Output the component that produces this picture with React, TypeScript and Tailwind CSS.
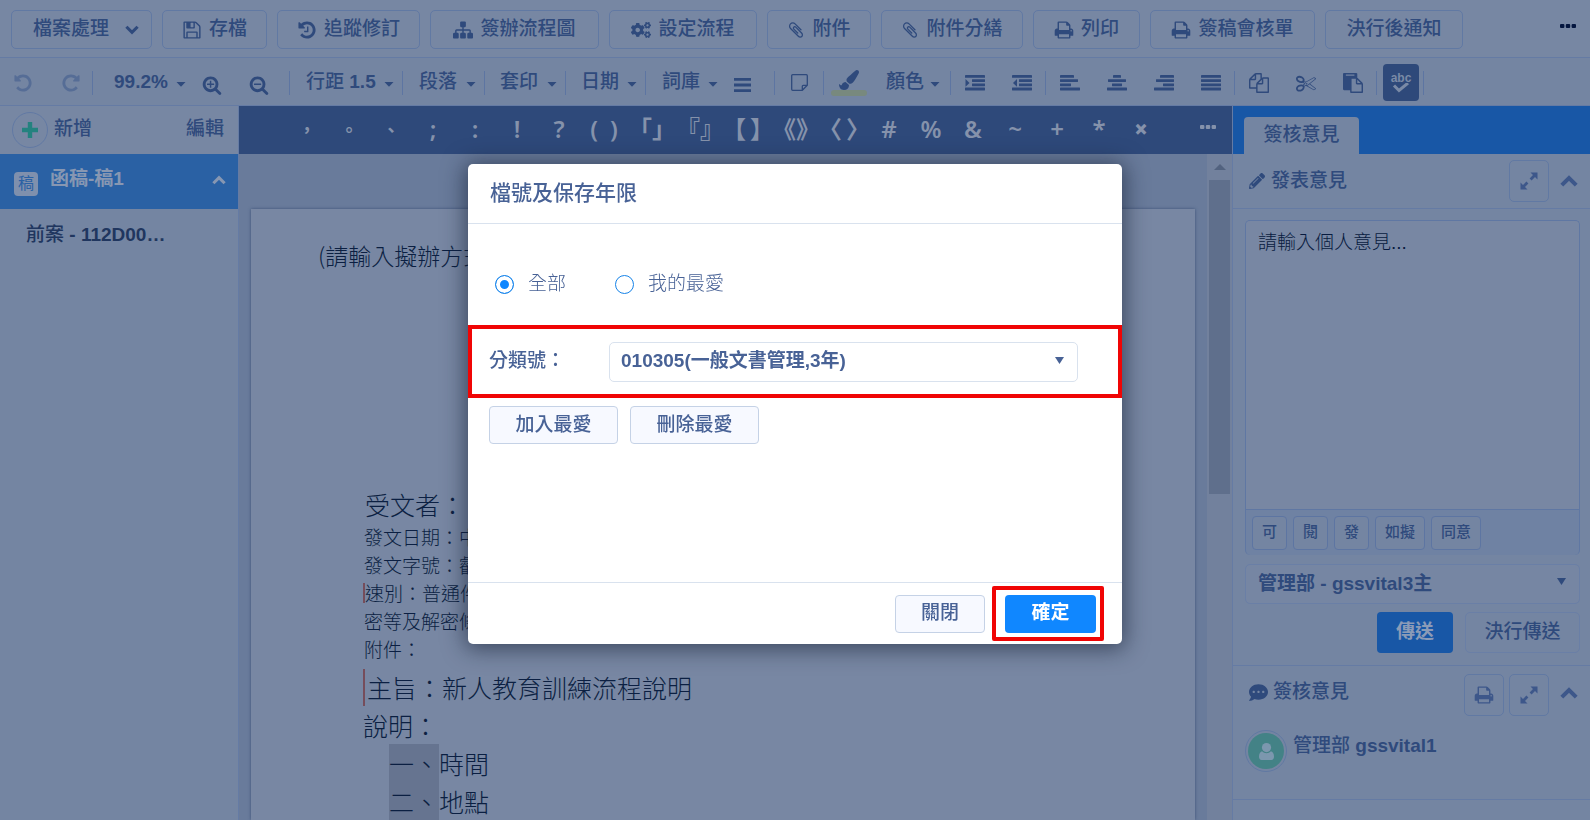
import { useState } from 'react'
import type { ReactNode } from 'react'

import { clsx } from 'clsx'
import { FaCogs, FaCommentDots, FaPaintBrush, FaPencilAlt } from 'react-icons/fa'

const glyphs = {
  save: 'M512 1536h768v-384h-768v384zm896 0h128v-896q0-14-10-38.5t-20-34.5l-281-281q-10-10-34-20t-39-10v416q0 40-28 68t-68 28h-576q-40 0-68-28t-28-68v-416h-128v1280h128v-416q0-40 28-68t68-28h832q40 0 68 28t28 68v416zm-384-928v-320q0-13-9.5-22.5t-22.5-9.5h-192q-13 0-22.5 9.5t-9.5 22.5v320q0 13 9.5 22.5t22.5 9.5h192q13 0 22.5-9.5t9.5-22.5zm640 32v928q0 40-28 68t-68 28h-1344q-40 0-68-28t-28-68v-1344q0-40 28-68t68-28h928q40 0 88 20t76 48l280 280q28 28 48 76t20 88z',
  undo: 'M1664 896q0 156-61 298t-164 245-245 164-298 61q-172 0-327-72.5t-264-204.5q-7-10-6.5-22.5t8.5-20.5l137-138q10-9 25-9 16 2 23 12 73 95 179 147t225 52q104 0 198.5-40.5t163.5-109.5 109.5-163.5 40.5-198.5-40.5-198.5-109.5-163.5-163.5-109.5-198.5-40.5q-98 0-188 35.5t-160 101.5l137 138q31 30 14 69-17 40-59 40h-448q-26 0-45-19t-19-45v-448q0-42 40-59 39-17 69 14l130 129q107-101 244.5-156.5t284.5-55.5q156 0 298 61t245 164 164 245 61 298z',
  history:
    'M1664 896q0 156-61 298t-164 245-245 164-298 61q-172 0-327-72.5t-264-204.5q-7-10-6.5-22.5t8.5-20.5l137-138q10-9 25-9 16 2 23 12 73 95 179 147t225 52q104 0 198.5-40.5t163.5-109.5 109.5-163.5 40.5-198.5-40.5-198.5-109.5-163.5-163.5-109.5-198.5-40.5q-98 0-188 35.5t-160 101.5l137 138q31 30 14 69-17 40-59 40h-448q-26 0-45-19t-19-45v-448q0-42 40-59 39-17 69 14l130 129q107-101 244.5-156.5t284.5-55.5q156 0 298 61t245 164 164 245 61 298zm-640-288v448q0 14-9 23t-23 9h-320q-14 0-23-9t-9-23v-64q0-14 9-23t23-9h224v-352q0-14 9-23t23-9h64q14 0 23 9t9 23z',
  sitemap:
    'M1792 1248v320q0 40-28 68t-68 28h-320q-40 0-68-28t-28-68v-320q0-40 28-68t68-28h96v-192h-512v192h96q40 0 68 28t28 68v320q0 40-28 68t-68 28h-320q-40 0-68-28t-28-68v-320q0-40 28-68t68-28h96v-192h-512v192h96q40 0 68 28t28 68v320q0 40-28 68t-68 28h-320q-40 0-68-28t-28-68v-320q0-40 28-68t68-28h96v-192q0-52 38-90t90-38h512v-192h-96q-40 0-68-28t-28-68v-320q0-40 28-68t68-28h320q40 0 68 28t28 68v320q0 40-28 68t-68 28h-96v192h512q52 0 90 38t38 90v192h96q40 0 68 28t28 68z',
  clip: 'M1596 1385q0 117-79 196t-196 79q-135 0-235-100l-777-776q-113-115-113-271 0-159 110-270t269-111q158 0 273 113l605 606q10 10 10 22 0 16-30.5 46.5t-46.5 30.5q-13 0-23-10l-606-607q-79-77-181-77-106 0-179 75t-73 181q0 105 76 181l776 777q63 63 145 63 64 0 106-42t42-106q0-82-63-145l-581-581q-26-24-60-24-29 0-48 19t-19 48q0 32 25 59l410 410q10 10 10 22 0 16-31 47t-47 31q-12 0-22-10l-410-410q-63-61-63-149 0-82 57-139t139-57q88 0 149 63l581 581q100 98 100 235z',
  print:
    'M448 1536h896v-256h-896v256zm0-640h896v-384h-160q-40 0-68-28t-28-68v-160h-640v640zm1152 64q0-26-19-45t-45-19-45 19-19 45 19 45 45 19 45-19 19-45zm128 0v416q0 13-9.5 22.5t-22.5 9.5h-224v160q0 40-28 68t-68 28h-960q-40 0-68-28t-28-68v-160h-224q-13 0-22.5-9.5t-9.5-22.5v-416q0-79 56.5-135.5t135.5-56.5h64v-544q0-40 28-68t68-28h672q40 0 88 20t76 48l152 152q28 28 48 76t20 88v256h64q79 0 135.5 56.5t56.5 135.5z',
  zoomIn:
    'M1088 800v64q0 13-9.5 22.5t-22.5 9.5h-224v224q0 13-9.5 22.5t-22.5 9.5h-64q-13 0-22.5-9.5t-9.5-22.5v-224h-224q-13 0-22.5-9.5t-9.5-22.5v-64q0-13 9.5-22.5t22.5-9.5h224v-224q0-13 9.5-22.5t22.5-9.5h64q13 0 22.5 9.5t9.5 22.5v224h224q13 0 22.5 9.5t9.5 22.5zm128 32q0-185-131.5-316.5t-316.5-131.5-316.5 131.5-131.5 316.5 131.5 316.5 316.5 131.5 316.5-131.5 131.5-316.5zm512 832q0 53-37.5 90.5t-90.5 37.5q-54 0-90-38l-343-342q-179 124-399 124-143 0-273.5-55.5t-225-150-150-225-55.5-273.5 55.5-273.5 150-225 225-150 273.5-55.5 273.5 55.5 225 150 150 225 55.5 273.5q0 220-124 399l343 343q37 37 37 90z',
  zoomOut:
    'M1088 800v64q0 13-9.5 22.5t-22.5 9.5h-576q-13 0-22.5-9.5t-9.5-22.5v-64q0-13 9.5-22.5t22.5-9.5h576q13 0 22.5 9.5t9.5 22.5zm128 32q0-185-131.5-316.5t-316.5-131.5-316.5 131.5-131.5 316.5 131.5 316.5 316.5 131.5 316.5-131.5 131.5-316.5zm512 832q0 53-37.5 90.5t-90.5 37.5q-54 0-90-38l-343-342q-179 124-399 124-143 0-273.5-55.5t-225-150-150-225-55.5-273.5 55.5-273.5 150-225 225-150 273.5-55.5 273.5 55.5 225 150 150 225 55.5 273.5q0 220-124 399l343 343q37 37 37 90z',
  copy: 'M1696 384q40 0 68 28t28 68v1216q0 40-28 68t-68 28h-960q-40 0-68-28t-28-68v-288h-544q-40 0-68-28t-28-68v-672q0-40 20-88t48-76l408-408q28-28 76-48t88-20h416q40 0 68 28t28 68v328q68-40 128-40h416zm-544 213l-299 299h299v-299zm-640-384l-299 299h299v-299zm196 647l316-316v-416h-384v416q0 40-28 68t-68 28h-416v640h512v-256q0-40 20-88t48-76zm956 804v-1152h-384v416q0 40-28 68t-68 28h-416v640h896z',
  cut: 'M960 896q26 0 45 19t19 45-19 45-45 19-45-19-19-45 19-45 45-19zm300 64l507 398q28 20 25 56-5 35-35 51l-128 64q-13 7-29 7-17 0-31-8l-690-387-110 66q-8 4-12 5 14 49 10 97-7 77-56 147.5t-132 123.5q-132 84-277 84-136 0-222-78-90-84-79-207 7-76 56-147t131-124q132-84 278-84 83 0 151 31 9-13 22-22l122-73-122-73q-13-9-22-22-68 31-151 31-146 0-278-84-82-53-131-124t-56-147q-5-59 15.5-113t63.5-93q85-79 222-79 145 0 277 84 83 52 132 123t56 148q4 48-10 97 4 1 12 5l110 66 690-387q14-8 31-8 16 0 29 7l128 64q30 16 35 51 3 36-25 56zm-681-260q46-42 21-108t-106-117q-92-59-192-59-74 0-113 36-46 42-21 108t106 117q92 59 192 59 74 0 113-36zm-85 745q81-51 106-117t-21-108q-39-36-113-36-100 0-192 59-81 51-106 117t21 108q39 36 113 36 100 0 192-59zm178-613l96 58v-11q0-36 33-56l14-8-79-44-26 26q-3 3-10 11t-12 12q-2 2-4 3.5t-3 2.5zm224 224l96 32 736-576-128-64-768 431v113l-160 96 9 8q2 2 7 6 4 4 11 12t11 12l26 26zm704 416l128-64-520-408-177 138q-2 3-13 7z',
  paste:
    'M768 1664h896v-640h-416q-40 0-68-28t-28-68v-416h-384v1152zm256-1440v-64q0-13-9.5-22.5t-22.5-9.5h-704q-13 0-22.5 9.5t-9.5 22.5v64q0 13 9.5 22.5t22.5 9.5h704q13 0 22.5-9.5t9.5-22.5zm256 672h299l-299-299v299zm512 128v672q0 40-28 68t-68 28h-960q-40 0-68-28t-28-68v-160h-544q-40 0-68-28t-28-68v-1344q0-40 28-68t68-28h1088q40 0 68 28t28 68v328q21 13 36 28l408 408q28 28 48 76t20 88z',
}

function Glyph({ name, className = 'size-5' }: { name: keyof typeof glyphs; className?: string }) {
  return (
    <svg viewBox="0 0 1792 1792" fill="currentColor" className={clsx('shrink-0', className)}>
      <path d={glyphs[name]} />
    </svg>
  )
}

// each row is [x, width] on a 20px wide grid
const lineRows = {
  left: [[0, 14], [0, 18], [0, 11], [0, 20]],
  center: [[6, 8], [1, 18], [5, 10], [0, 20]],
  right: [[6, 14], [2, 18], [9, 11], [0, 20]],
  justify: [[0, 20], [0, 20], [0, 20], [0, 20]],
  indent: [[0, 20], [7, 13], [7, 13], [0, 20]],
  outdent: [[0, 20], [7, 13], [7, 13], [0, 20]],
}

function LinesIcon({ kind }: { kind: keyof typeof lineRows }) {
  return (
    <svg viewBox="0 0 20 16" fill="currentColor" className="h-4 w-5">
      {lineRows[kind].map(([x, width], i) => (
        <rect key={i} x={x} y={i * 4.2} width={width} height="2.8" rx="0.4" />
      ))}
      {kind === 'indent' && <path d="M0.5 4l4 3.9-4 3.9z" />}
      {kind === 'outdent' && <path d="M5 4L1 7.9l4 3.9z" />}
    </svg>
  )
}

function Chevron({ up, className }: { up?: boolean; className?: string }) {
  return (
    <svg
      viewBox="0 0 18 12"
      fill="none"
      stroke="currentColor"
      strokeWidth="4"
      className={clsx('shrink-0', className)}
    >
      <path d={up ? 'M1.8 10.2L9 3l7.2 7.2' : 'M1.8 1.8L9 9l7.2-7.2'} />
    </svg>
  )
}

function Caret() {
  return (
    <svg viewBox="0 0 10 5" fill="currentColor" className="mt-1 h-[5px] w-2.5 shrink-0">
      <path d="M0.5 0h9L5 4.8z" />
    </svg>
  )
}

function ExpandIcon() {
  return (
    <svg viewBox="0 0 18 18" fill="currentColor" className="size-[18px]">
      <path d="M17.5.5v7L15 5l-3.4 3.4-2-2L13 3 10.5.5zM.5 17.5v-7L3 13l3.4-3.4 2 2L5 15l2.5 2.5z" />
    </svg>
  )
}

function Dots() {
  return (
    <svg viewBox="0 0 16 4" fill="currentColor" className="h-1 w-4">
      <rect width="4.4" height="4" rx="1" />
      <rect x="5.8" width="4.4" height="4" rx="1" />
      <rect x="11.6" width="4.4" height="4" rx="1" />
    </svg>
  )
}

const actions: { label: string; icon?: ReactNode; width: string }[] = [
  { label: '存檔', icon: <Glyph name="save" />, width: 'w-[105px]' },
  { label: '追蹤修訂', icon: <Glyph name="history" />, width: 'w-[143px]' },
  { label: '簽辦流程圖', icon: <Glyph name="sitemap" />, width: 'w-[169px]' },
  { label: '設定流程', icon: <FaCogs className="size-5" />, width: 'w-[148px]' },
  { label: '附件', icon: <Glyph name="clip" className="size-[18px]" />, width: 'w-[104px]' },
  { label: '附件分繕', icon: <Glyph name="clip" className="size-[18px]" />, width: 'w-[142px]' },
  { label: '列印', icon: <Glyph name="print" />, width: 'w-[107px]' },
  { label: '簽稿會核單', icon: <Glyph name="print" />, width: 'w-[165px]' },
  { label: '決行後通知', width: 'w-[138px]' },
]

function ActionBar() {
  return (
    <div className="flex h-[58px] shrink-0 items-center gap-2.5 border-b border-[#657ba4] bg-[#7787a3] pl-[11px] pr-3.5 pt-0.5">
      <button
        type="button"
        className="flex h-[39px] w-[141px] shrink-0 items-center justify-between rounded-[5px] border border-[#6179a3] pl-[21px] pr-3"
      >
        檔案處理
        <Chevron className="h-2.5 w-3.5" />
      </button>
      {actions.map((action) => (
        <button
          key={action.label}
          type="button"
          className={clsx(
            'flex h-[39px] shrink-0 items-center justify-center gap-[7px] whitespace-nowrap rounded-[5px] border border-[#6179a3]',
            action.width,
          )}
        >
          {action.icon}
          {action.label}
        </button>
      ))}
      <button type="button" aria-label="更多" className="mb-2 ml-auto text-[#04163f]">
        <Dots />
      </button>
    </div>
  )
}

function Divider() {
  return <span className="h-6 w-px shrink-0 bg-[#5d75a2]" />
}

function ToolMenu({ children, className }: { children: ReactNode; className: string }) {
  return (
    <button
      type="button"
      className={clsx('flex shrink-0 items-center justify-between whitespace-nowrap', className)}
    >
      <span>{children}</span>
      <Caret />
    </button>
  )
}

function Tool({ label, children, className = 'w-[47px]' }: { label: string; children: ReactNode; className?: string }) {
  return (
    <button
      type="button"
      aria-label={label}
      className={clsx('flex h-10 shrink-0 items-center justify-center', className)}
    >
      {children}
    </button>
  )
}

function FormatBar() {
  return (
    <div className="flex h-12 shrink-0 items-center border-b border-[#657ba4] bg-[#7485a2] pt-0.5">
      <Tool label="復原" className="w-[46px] text-[#566d96]">
        <Glyph name="undo" />
      </Tool>
      <Tool label="重做" className="w-[46px] pl-1 text-[#566d96]">
        <Glyph name="undo" className="size-5 -scale-x-100" />
      </Tool>
      <Divider />
      <ToolMenu className="w-[93px] pl-[21px]">
        <b>99.2%</b>
      </ToolMenu>
      <Tool label="放大" className="w-[51px]">
        <Glyph name="zoomIn" className="mt-1 size-5" />
      </Tool>
      <Tool label="縮小" className="w-[52px] pr-2">
        <Glyph name="zoomOut" className="mt-1 size-5" />
      </Tool>
      <Divider />
      <ToolMenu className="w-28 pl-4 pr-2">
        行距 <b>1.5</b>
      </ToolMenu>
      <Divider />
      <ToolMenu className="w-[81px] pl-4 pr-2">段落</ToolMenu>
      <Divider />
      <ToolMenu className="w-[80px] pl-[15px] pr-2">套印</ToolMenu>
      <Divider />
      <ToolMenu className="w-[79px] pl-[15px] pr-2">日期</ToolMenu>
      <Divider />
      <ToolMenu className="w-[72px] pl-4">詞庫</ToolMenu>
      <Tool label="清單" className="w-14 pr-2">
        <svg viewBox="0 0 17 14" fill="currentColor" className="mt-1 h-3.5 w-[17px]">
          <path d="M0 0h17v2.8H0zM0 5.6h17v2.8H0zM0 11.2h17V14H0z" />
        </svg>
      </Tool>
      <Divider />
      <Tool label="便箋" className="w-12">
        <svg viewBox="0 0 17 17" fill="none" stroke="currentColor" strokeWidth="1.3" className="size-[17px]">
          <path d="M1.7.7h13.6a1 1 0 0 1 1 1v9.6l-5 5H1.7a1 1 0 0 1-1-1V1.700a1 1 0 0 1 1-1zM16.300 11.300h-4a1 1 0 0 0-1 1v4" />
        </svg>
      </Tool>
      <Divider />
      <Tool label="螢光筆" className="w-[50px]">
        <span className="flex w-9 flex-col items-center">
          <FaPaintBrush className="size-5" />
          <span className="h-1.5 w-9 rounded-sm bg-[#78897e]" />
        </span>
      </Tool>
      <ToolMenu className="w-[76px] pl-3 pr-2.5">顏色</ToolMenu>
      <Divider />
      <Tool label="增加縮排">
        <LinesIcon kind="indent" />
      </Tool>
      <Tool label="減少縮排">
        <LinesIcon kind="outdent" />
      </Tool>
      <Divider />
      <Tool label="靠左">
        <LinesIcon kind="left" />
      </Tool>
      <Tool label="置中">
        <LinesIcon kind="center" />
      </Tool>
      <Tool label="靠右">
        <LinesIcon kind="right" />
      </Tool>
      <Tool label="左右對齊">
        <LinesIcon kind="justify" />
      </Tool>
      <Divider />
      <Tool label="複製">
        <Glyph name="copy" />
      </Tool>
      <Tool label="剪下">
        <Glyph name="cut" />
      </Tool>
      <Tool label="貼上">
        <Glyph name="paste" />
      </Tool>
      <Divider />
      <button
        type="button"
        className="ml-1.5 mr-1 flex h-[37px] w-9 shrink-0 flex-col items-center justify-center rounded bg-[#2e497a] text-[#7a8aa6]"
      >
        <span className="text-xs font-bold leading-2.5">abc</span>
        <svg viewBox="0 0 18 10" fill="none" stroke="currentColor" strokeWidth="3" className="h-2.5 w-[18px]">
          <path d="M2 2.5l5 5L16 0" />
        </svg>
      </button>
      <Divider />
    </div>
  )
}

const symbols = [
  '，', '。', '、', ';', ':', '!', '?', '()', '「」', '『』', '【】', '《》', '〈〉', '#', '%', '&', '~', '+', '*', '×',
]

const spacedPairs = ['【】', '〈〉']

function SymbolBar() {
  return (
    <div className="flex h-12 shrink-0 items-center bg-[#2e497a] pl-[47px] pr-4 font-['Noto_Sans','Noto_Sans_CJK_TC',sans-serif] text-2xl font-semibold text-[#8592ab]">
      {symbols.map((symbol, i) => (
        <button
          key={symbol}
          type="button"
          className={clsx(
            'flex h-10 shrink-0 items-center justify-center',
            symbol.length > 1 ? 'w-12' : 'w-[42px]',
            i < 3 ? 'text-lg' : 'pb-0.5',
            symbol === '()' && 'gap-3',
            symbol === '×' && 'font-black',
            spacedPairs.includes(symbol) && 'gap-1',
          )}
        >
          {symbol.split('').map((char) => (
            <span key={char}>{char}</span>
          ))}
        </button>
      ))}
      <button type="button" aria-label="更多符號" className="mb-1.5 ml-auto">
        <Dots />
      </button>
    </div>
  )
}

function Sidebar() {
  return (
    <aside className="flex w-[239px] shrink-0 flex-col border-r border-[#657ba4] bg-[#7485a2]">
      <div className="flex h-12 items-center bg-[#7787a3] pl-3 pr-3.5">
        <button type="button" className="flex items-center gap-1.5">
          <span className="flex size-9 items-center justify-center rounded-full border border-[#6179a3] text-[#24827f]">
            <svg viewBox="0 0 16 16" fill="currentColor" className="size-4">
              <path d="M5.8 0h4.4v5.8H16v4.4h-5.8V16H5.8v-5.8H0V5.8h5.8z" />
            </svg>
          </span>
          <span className="pb-0.5">新增</span>
        </button>
        <button type="button" className="ml-auto pb-0.5">
          編輯
        </button>
      </div>
      <button
        type="button"
        className="flex h-[55px] items-center bg-[#2a61a4] pl-3.5 pr-3 font-bold text-[#8797b2]"
      >
        <span className="mr-3 mt-1 flex size-6 items-center justify-center rounded bg-[#7f90ad] text-base font-normal text-[#2a61a4]">
          稿
        </span>
        <span className="pb-1">函稿-稿1</span>
        <Chevron up className="mb-1 ml-auto h-2.5 w-3.5" />
      </button>
      <a href="#case" className="flex h-[52px] items-center pl-[26px] text-[#20365f]">
        <span>
          前案 <b>- 112D00…</b>
        </span>
      </a>
    </aside>
  )
}

function DocumentPage() {
  return (
    <article className="ml-3 mr-3 min-h-0 flex-1 overflow-hidden bg-[#7887a3] font-['Noto_Sans_CJK_TC',sans-serif] text-[25px] font-light text-[#0b1f42] shadow-[0_0_3px_#3c5078]">
      <p className="pl-[67px] pt-[29px] text-[23px] leading-[34px]">(請輸入擬辦方式)</p>
      <div className="pl-28 pt-[213px]">
        <p className="pl-0.5 leading-[38px]">受文者：</p>
        <div className="pl-px text-[19px] leading-[28px]">
          <p>發文日期：中華民國</p>
          <p>發文字號：叡字第</p>
          <p className="flex items-center">
            <span className="-ml-px h-5 w-0.5 bg-[#764d5b]" />
            速別：普通件
          </p>
          <p>密等及解密條件</p>
          <p>附件：</p>
        </div>
        <p className="mt-1.5 flex h-[37px] items-center gap-0.5">
          <span className="h-full w-0.5 bg-[#764d5b]" />
          主旨：新人教育訓練流程說明
        </p>
        <p className="leading-[38px]">說明：</p>
        <ol className="pl-[26px] leading-[38px]">
          <li className="flex">
            <span className="bg-[#667490]">一、</span>
            時間
          </li>
          <li className="flex">
            <span className="bg-[#667490]">二、</span>
            地點
          </li>
        </ol>
      </div>
    </article>
  )
}

function Editor() {
  return (
    <main className="flex min-w-0 flex-1 flex-col">
      <SymbolBar />
      <div className="flex min-h-0 flex-1 bg-[#697b9b]">
        <div className="flex min-w-0 flex-1 flex-col pt-[55px]">
          <DocumentPage />
        </div>
        <div className="flex w-[25px] flex-col items-center bg-[#72819d]">
          <svg viewBox="0 0 12 6" fill="#52627f" className="mb-2.5 mt-2.5 h-1.5 w-3">
            <path d="M6 0l6 6H0z" />
          </svg>
          <div className="h-[314px] w-[21px] shrink-0 bg-[#5f6f8c]" />
        </div>
      </div>
    </main>
  )
}

function SquareButton({ label, children }: { label: string; children: ReactNode }) {
  return (
    <button
      type="button"
      aria-label={label}
      className="flex h-[42px] w-10 items-center justify-center rounded-[5px] border border-[#6179a3] text-[#3d578a]"
    >
      {children}
    </button>
  )
}

function OpinionPanel() {
  return (
    <aside className="flex w-[358px] shrink-0 flex-col border-l border-[#657ba4] bg-[#7485a2]">
      <div className="flex h-12 shrink-0 items-end bg-[#1857a6] pl-[11px]">
        <button type="button" className="h-[37px] w-[115px] rounded-t bg-[#7485a2]">
          簽核意見
        </button>
      </div>
      <div className="flex h-[55px] shrink-0 items-center border-b border-[#657ba4] pl-4 pr-3">
        <FaPencilAlt className="mr-1.5 size-4" />
        發表意見
        <span className="ml-auto flex items-center gap-[11px] text-[#3d578a]">
          <SquareButton label="展開">
            <ExpandIcon />
          </SquareButton>
          <Chevron up className="h-3 w-[18px]" />
        </span>
      </div>
      <div className="flex flex-col border-b border-[#657ba4] pb-3 pl-3 pr-2.5 pt-[11px]">
        <div className="flex h-[335px] flex-col overflow-hidden rounded-[5px] border border-b-0 border-[#5f77a3] bg-[#6f82a3]">
          <textarea
            aria-label="發表意見"
            placeholder="請輸入個人意見..."
            className="flex-1 resize-none border-b border-[#5f77a3] bg-[#7887a3] px-3 py-2 font-light leading-7 placeholder:text-[#081b3f]"
          />
          <div className="flex h-[45px] items-center gap-1.5 px-1.5 text-[15px]">
            {['可', '閱', '發', '如擬', '同意'].map((text) => (
              <button
                key={text}
                type="button"
                className="h-[34px] rounded border border-[#5d75a2] bg-[#7485a2] px-[9px]"
              >
                {text}
              </button>
            ))}
          </div>
        </div>
        <div className="relative mt-[9px]">
          <select
            aria-label="傳送對象"
            className="h-10 w-full appearance-none rounded-[5px] border border-[#6a7fa6] bg-[#7686a3] pl-3 font-bold"
          >
            <option>管理部 - gssvital3主</option>
          </select>
          <svg viewBox="0 0 9 7" fill="currentColor" className="pointer-events-none absolute right-3.5 top-3.5 h-[7px] w-[9px]">
            <path d="M0 0h9L4.5 7z" />
          </svg>
        </div>
        <div className="mt-2 flex justify-end gap-3">
          <button type="button" className="h-[41px] w-[76px] rounded bg-[#1857a6] font-bold text-[#8b9bb7]">
            傳送
          </button>
          <button type="button" className="h-[41px] w-[115px] rounded-[5px] border border-[#6a7fa6]">
            決行傳送
          </button>
        </div>
      </div>
      <div className="h-[134px] shrink-0 border-b border-[#657ba4] pl-3 pr-3 pt-2">
        <div className="flex h-[42px] items-center">
          <FaCommentDots className="mb-1.5 ml-1 mr-[5px] size-[19px]" />
          <span className="mb-1.5">簽核意見</span>
          <span className="ml-auto flex items-center gap-[5px] text-[#3d578a]">
            <SquareButton label="列印">
              <Glyph name="print" />
            </SquareButton>
            <SquareButton label="展開">
              <ExpandIcon />
            </SquareButton>
            <Chevron up className="mb-1 ml-1.5 h-3 w-[18px]" />
          </span>
        </div>
        <div className="mt-3.5 flex gap-1.5">
          <span className="flex size-[42px] items-center justify-center rounded-full border border-[#6179a3]">
            <span className="flex size-9 items-center justify-center rounded-full bg-[#438286] text-[#7c97ae]">
              <svg viewBox="0 0 15 17" fill="currentColor" className="h-[17px] w-[15px]">
                <circle cx="7.5" cy="4.6" r="4.6" />
                <path d="M3 8.2a6 6 0 0 0 9 0c2 .6 3 2.6 3 5.6 0 2-1 3.2-2.6 3.2H2.6C1 17 0 15.8 0 13.8c0-3 1-5 3-5.6z" />
              </svg>
            </span>
          </span>
          <span className="pt-0.5">
            管理部 <b>gssvital1</b>
          </span>
        </div>
      </div>
    </aside>
  )
}

const scopes = [
  { value: 'all', label: '全部' },
  { value: 'favorite', label: '我的最愛' },
]

function FileNumberDialog() {
  const [scope, setScope] = useState('all')

  return (
    <div className="fixed inset-0 flex items-start justify-center pt-[164px]">
      <div
        role="dialog"
        aria-labelledby="dialog-title"
        className="flex w-[654px] flex-col rounded-[5px] bg-white text-[#486296] shadow-[0_2px_22px_3px_rgba(20,30,50,0.6)]"
      >
        <h2 id="dialog-title" className="flex h-[60px] items-center border-b border-[#d9e2ee] pb-0.5 pl-[22px] text-[21px]">
          檔號及保存年限
        </h2>
        <div className="flex h-[101px] items-center gap-[49px] pl-[27px] pt-5">
          {scopes.map((item) => (
            <label key={item.value} className="flex items-center gap-3.5 font-light">
              <input
                type="radio"
                name="scope"
                checked={scope === item.value}
                onChange={() => setScope(item.value)}
                className="size-[19px] appearance-none rounded-full border border-[#1683e8] bg-white checked:bg-[#1087ff] checked:shadow-[inset_0_0_0_4px_white]"
              />
              {item.label}
            </label>
          ))}
        </div>
        <div className="flex h-[73px] items-center border-4 border-[#f00505] pl-[17px] pr-10">
          <label htmlFor="category" className="w-[120px] shrink-0">
            分類號：
          </label>
          <div className="relative flex-1">
            <select
              id="category"
              className="h-10 w-full appearance-none rounded-[5px] border border-[#d9e2ee] bg-white pl-[11px] font-bold"
            >
              <option>010305(一般文書管理,3年)</option>
            </select>
            <svg viewBox="0 0 9 7" fill="currentColor" className="pointer-events-none absolute right-3.5 top-[15px] h-[7px] w-[9px]">
              <path d="M0 0h9L4.5 7z" />
            </svg>
          </div>
        </div>
        <div className="flex h-[184px] gap-3 pl-[21px] pt-2">
          <button type="button" className="h-[38px] w-[129px] rounded border border-[#c5d2e6] bg-[#f7f9ff]">
            加入最愛
          </button>
          <button type="button" className="h-[38px] w-[129px] rounded border border-[#c5d2e6] bg-[#f7f9ff]">
            刪除最愛
          </button>
        </div>
        <footer className="flex h-[62px] items-center justify-end gap-[7px] border-t border-[#d9e2ee] pr-[18px]">
          <button type="button" className="h-[38px] w-[90px] rounded border border-[#c5d2e6] bg-[#f7f9ff]">
            關閉
          </button>
          <span className="flex h-[55px] w-28 items-center justify-end rounded-xs border-4 border-[#f00505] pr-1">
            <button type="button" className="h-[38px] w-[91px] rounded bg-[#1087ff] font-bold text-white">
              確定
            </button>
          </span>
        </footer>
      </div>
    </div>
  )
}

export default function App() {
  return (
    <div className="flex h-screen flex-col overflow-hidden bg-[#7485a2] font-['Liberation_Sans','Noto_Sans_CJK_TC',sans-serif] text-[19px] font-medium text-[#2f4a7c]">
      <ActionBar />
      <FormatBar />
      <div className="flex min-h-0 flex-1">
        <Sidebar />
        <Editor />
        <OpinionPanel />
      </div>
      <FileNumberDialog />
    </div>
  )
}
